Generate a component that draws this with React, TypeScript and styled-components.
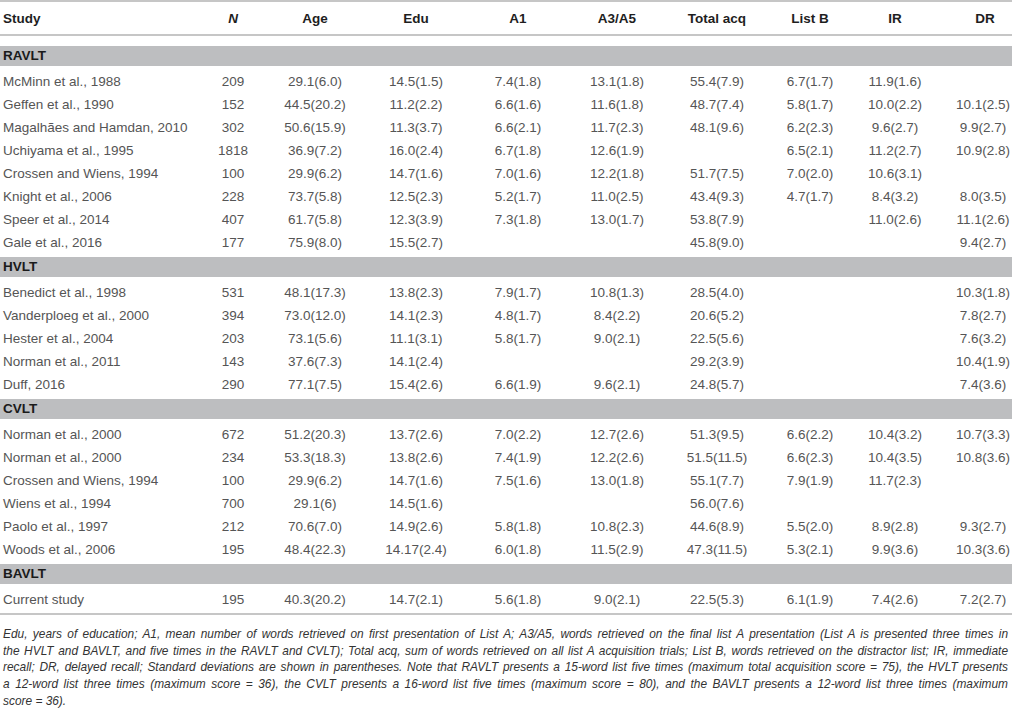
import React from 'react';
import styled, { createGlobalStyle } from 'styled-components';

const GlobalStyle = createGlobalStyle`
  html, body { margin: 0; padding: 0; background: #ffffff; }
  body { font-family: "Liberation Sans", Arial, Helvetica, sans-serif; }
`;

const COLS = '200px 66px 98px 104px 100px 98px 102px 84px 86px 74px';

const Page = styled.div`
  width: 1012px;
`;

const Table = styled.div`
  display: flex;
  flex-direction: column;
  border-bottom: 2px solid #c6c6c6;
  padding-bottom: 2px;
`;

const HeaderRow = styled.div`
  display: grid;
  grid-template-columns: ${COLS};
  align-items: center;
  height: 32px;
  border-top: 2px solid #c6c6c6;
  border-bottom: 2px solid #c6c6c6;
  margin-bottom: 10px;
  font-size: 13.5px;
  font-weight: bold;
  color: #1e1e1e;
`;

const HeadCell = styled.div<{ $left?: boolean; $italic?: boolean; $last?: boolean }>`
  text-align: ${(p) => (p.$left ? 'left' : 'center')};
  padding-left: ${(p) => (p.$left ? '3px' : p.$last ? '20px' : '0')};
  font-style: ${(p) => (p.$italic ? 'italic' : 'normal')};
`;

const Section = styled.div`
  display: flex;
  flex-direction: column;
  & + & {
    margin-top: 3px;
  }
`;

const SectionBar = styled.div`
  height: 20px;
  line-height: 20px;
  background: #bdbec0;
  padding-left: 3px;
  margin-bottom: 4px;
  font-size: 13.5px;
  font-weight: bold;
  color: #1a1a1a;
`;

const Row = styled.div`
  display: grid;
  grid-template-columns: ${COLS};
  align-items: center;
  height: 23px;
  font-size: 13.5px;
  color: #555555;
`;

const Cell = styled.div<{ $left?: boolean; $last?: boolean }>`
  text-align: ${(p) => (p.$left ? 'left' : 'center')};
  padding-left: ${(p) => (p.$left ? '3px' : p.$last ? '16px' : '0')};
  white-space: nowrap;
`;

const Note = styled.div`
  padding: 11px 4px 0 3px;
  font-size: 11.9px;
  font-style: italic;
  color: #333333;
`;

const NoteLine = styled.div<{ $final?: boolean }>`
  height: 16.7px;
  line-height: 16.7px;
  text-align: ${(p) => (p.$final ? 'left' : 'justify')};
  text-align-last: ${(p) => (p.$final ? 'left' : 'justify')};
`;

type RowData = string[];

const headers = ['Study', 'N', 'Age', 'Edu', 'A1', 'A3/A5', 'Total acq', 'List B', 'IR', 'DR'];

const sections: { name: string; rows: RowData[] }[] = [
  {
    name: 'RAVLT',
    rows: [
      ['McMinn et al., 1988', '209', '29.1(6.0)', '14.5(1.5)', '7.4(1.8)', '13.1(1.8)', '55.4(7.9)', '6.7(1.7)', '11.9(1.6)', ''],
      ['Geffen et al., 1990', '152', '44.5(20.2)', '11.2(2.2)', '6.6(1.6)', '11.6(1.8)', '48.7(7.4)', '5.8(1.7)', '10.0(2.2)', '10.1(2.5)'],
      ['Magalhães and Hamdan, 2010', '302', '50.6(15.9)', '11.3(3.7)', '6.6(2.1)', '11.7(2.3)', '48.1(9.6)', '6.2(2.3)', '9.6(2.7)', '9.9(2.7)'],
      ['Uchiyama et al., 1995', '1818', '36.9(7.2)', '16.0(2.4)', '6.7(1.8)', '12.6(1.9)', '', '6.5(2.1)', '11.2(2.7)', '10.9(2.8)'],
      ['Crossen and Wiens, 1994', '100', '29.9(6.2)', '14.7(1.6)', '7.0(1.6)', '12.2(1.8)', '51.7(7.5)', '7.0(2.0)', '10.6(3.1)', ''],
      ['Knight et al., 2006', '228', '73.7(5.8)', '12.5(2.3)', '5.2(1.7)', '11.0(2.5)', '43.4(9.3)', '4.7(1.7)', '8.4(3.2)', '8.0(3.5)'],
      ['Speer et al., 2014', '407', '61.7(5.8)', '12.3(3.9)', '7.3(1.8)', '13.0(1.7)', '53.8(7.9)', '', '11.0(2.6)', '11.1(2.6)'],
      ['Gale et al., 2016', '177', '75.9(8.0)', '15.5(2.7)', '', '', '45.8(9.0)', '', '', '9.4(2.7)'],
    ],
  },
  {
    name: 'HVLT',
    rows: [
      ['Benedict et al., 1998', '531', '48.1(17.3)', '13.8(2.3)', '7.9(1.7)', '10.8(1.3)', '28.5(4.0)', '', '', '10.3(1.8)'],
      ['Vanderploeg et al., 2000', '394', '73.0(12.0)', '14.1(2.3)', '4.8(1.7)', '8.4(2.2)', '20.6(5.2)', '', '', '7.8(2.7)'],
      ['Hester et al., 2004', '203', '73.1(5.6)', '11.1(3.1)', '5.8(1.7)', '9.0(2.1)', '22.5(5.6)', '', '', '7.6(3.2)'],
      ['Norman et al., 2011', '143', '37.6(7.3)', '14.1(2.4)', '', '', '29.2(3.9)', '', '', '10.4(1.9)'],
      ['Duff, 2016', '290', '77.1(7.5)', '15.4(2.6)', '6.6(1.9)', '9.6(2.1)', '24.8(5.7)', '', '', '7.4(3.6)'],
    ],
  },
  {
    name: 'CVLT',
    rows: [
      ['Norman et al., 2000', '672', '51.2(20.3)', '13.7(2.6)', '7.0(2.2)', '12.7(2.6)', '51.3(9.5)', '6.6(2.2)', '10.4(3.2)', '10.7(3.3)'],
      ['Norman et al., 2000', '234', '53.3(18.3)', '13.8(2.6)', '7.4(1.9)', '12.2(2.6)', '51.5(11.5)', '6.6(2.3)', '10.4(3.5)', '10.8(3.6)'],
      ['Crossen and Wiens, 1994', '100', '29.9(6.2)', '14.7(1.6)', '7.5(1.6)', '13.0(1.8)', '55.1(7.7)', '7.9(1.9)', '11.7(2.3)', ''],
      ['Wiens et al., 1994', '700', '29.1(6)', '14.5(1.6)', '', '', '56.0(7.6)', '', '', ''],
      ['Paolo et al., 1997', '212', '70.6(7.0)', '14.9(2.6)', '5.8(1.8)', '10.8(2.3)', '44.6(8.9)', '5.5(2.0)', '8.9(2.8)', '9.3(2.7)'],
      ['Woods et al., 2006', '195', '48.4(22.3)', '14.17(2.4)', '6.0(1.8)', '11.5(2.9)', '47.3(11.5)', '5.3(2.1)', '9.9(3.6)', '10.3(3.6)'],
    ],
  },
  {
    name: 'BAVLT',
    rows: [
      ['Current study', '195', '40.3(20.2)', '14.7(2.1)', '5.6(1.8)', '9.0(2.1)', '22.5(5.3)', '6.1(1.9)', '7.4(2.6)', '7.2(2.7)'],
    ],
  },
];

const noteLines = [
  'Edu, years of education; A1, mean number of words retrieved on first presentation of List A; A3/A5, words retrieved on the final list A presentation (List A is presented three times in',
  'the HVLT and BAVLT, and five times in the RAVLT and CVLT); Total acq, sum of words retrieved on all list A acquisition trials; List B, words retrieved on the distractor list; IR, immediate',
  'recall; DR, delayed recall; Standard deviations are shown in parentheses. Note that RAVLT presents a 15-word list five times (maximum total acquisition score = 75), the HVLT presents',
  'a 12-word list three times (maximum score = 36), the CVLT presents a 16-word list five times (maximum score = 80), and the BAVLT presents a 12-word list three times (maximum',
  'score = 36).',
];

export default function App() {
  return (
    <Page>
      <GlobalStyle />
      <Table>
        <HeaderRow>
          {headers.map((h, i) => (
            <HeadCell key={h} $left={i === 0} $italic={h === 'N'} $last={i === headers.length - 1}>
              {h}
            </HeadCell>
          ))}
        </HeaderRow>
        {sections.map((s) => (
          <Section key={s.name}>
            <SectionBar>{s.name}</SectionBar>
            {s.rows.map((r, ri) => (
              <Row key={ri}>
                {r.map((c, ci) => (
                  <Cell key={ci} $left={ci === 0} $last={ci === r.length - 1}>
                    {c}
                  </Cell>
                ))}
              </Row>
            ))}
          </Section>
        ))}
      </Table>
      <Note>
        {noteLines.map((l, i) => (
          <NoteLine key={i} $final={i === noteLines.length - 1}>
            {l}
          </NoteLine>
        ))}
      </Note>
    </Page>
  );
}
